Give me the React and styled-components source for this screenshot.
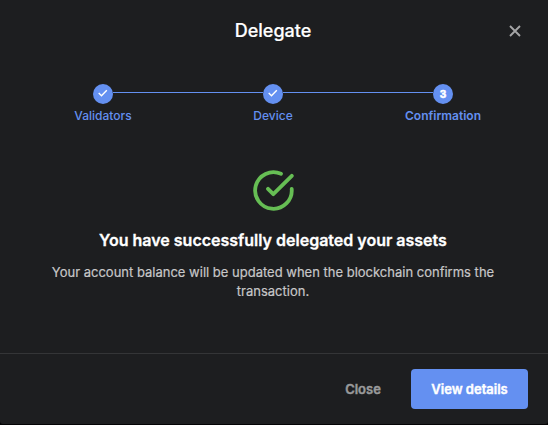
import React from 'react'
import styled, { createGlobalStyle } from 'styled-components'

const GlobalStyle = createGlobalStyle`
    * {
        box-sizing : border-box;
    }
    body {
        margin : 0;
        background-color : #040405;
        font-family : Inter, "Liberation Sans", sans-serif;
    }
`

const Modal = styled.div`
    display : flex;
    flex-direction : column;
    width : 548px;
    height : 424px;
    background-color : #1d1e20;
    border-radius : 0 0 3px 3px;
    color : #fff;
`

const Header = styled.header`
    display : grid;
    grid-template-columns : 1fr auto 1fr;
    align-items : center;
    height : 62px;
    padding : 0 26px 0 24px;
`

const Title = styled.h1`
    grid-column : 2;
    margin : 0;
    font-size : 18px;
    font-weight : 500;
    line-height : 22px;
    -webkit-text-stroke : 0.2px currentColor;
`

const CloseIcon = styled.button`
    display : flex;
    justify-self : end;
    padding : 0;
    border : 0;
    background : none;
    color : #a5a5a6;
    cursor : pointer;
`

const Stepper = styled.div`
    display : grid;
    grid-template-columns : repeat(3, 170px);
    justify-content : center;
    padding-top : 22px;
    padding-right : 2px;
`

const StepItem = styled.div`
    display : flex;
    flex-direction : column;
    align-items : center;
`

const Track = styled.div`
    display : flex;
    align-items : center;
    width : 100%;
`

const Line = styled.div`
    flex : 1;
    height : 1px;
    margin-bottom : 3px;
    background-color : ${({ $hidden }) => $hidden ? 'transparent' : '#6490f1'};
`

const Circle = styled.div`
    display : flex;
    align-items : center;
    justify-content : center;
    width : 20px;
    height : 20px;
    border-radius : 50%;
    background-color : #6490f1;
    font-size : 10px;
    font-weight : 800;
    line-height : 20px;
    -webkit-text-stroke : 0.4px currentColor;
`

const StepLabel = styled.span`
    margin-top : 4px;
    color : #6490f1;
    font-size : 12px;
    font-weight : ${({ $active }) => $active ? 600 : 500};
    line-height : 16px;
`

const Body = styled.div`
    display : flex;
    flex : 1;
    flex-direction : column;
    align-items : center;
    padding : 46px 42px 0 40px;
    text-align : center;
`

const Heading = styled.h2`
    margin : 19px 0 0;
    font-size : 16px;
    font-weight : 600;
    line-height : 20px;
    -webkit-text-stroke : 0.3px currentColor;
`

const Description = styled.p`
    margin : 13px 0 0;
    color : #c7c7c8;
    font-size : 13px;
    line-height : 19px;
    -webkit-text-stroke : 0.2px currentColor;
`

const Footer = styled.footer`
    display : flex;
    align-items : center;
    justify-content : flex-end;
    height : 71px;
    padding-right : 20px;
    border-top : 1px solid #343537;
`

const Button = styled.button`
    height : 40px;
    padding : 0;
    width : ${({ $primary }) => $primary ? '117px' : '96px'};
    border : 0;
    border-radius : 4px;
    background-color : ${({ $primary }) => $primary ? '#6490f1' : 'transparent'};
    color : ${({ $primary }) => $primary ? '#fff' : '#999a9b'};
    font-family : inherit;
    font-size : 13px;
    font-weight : 600;
    -webkit-text-stroke : 0.4px currentColor;
    cursor : pointer;
`

const steps = ['Validators', 'Device', 'Confirmation']

const Cross = () => (
    <svg width="14" height="14" viewBox="0 0 14 14" fill="none" stroke="currentColor" strokeWidth="1.9">
        <path d="M2 2l10 10M12 2L2 12" />
    </svg>
)

const StepCheck = () => (
    <svg width="20" height="20" viewBox="0 0 20 20" fill="none" stroke="#fff" strokeWidth="1.4">
        <path d="M5.7 9.1l2.8 2.6 5.3-5.5" />
    </svg>
)

const SuccessIcon = () => (
    <svg width="41" height="41" viewBox="0 0 41 41" fill="none" stroke="#66be54" strokeWidth="3.8" strokeLinecap="round" strokeLinejoin="round">
        <path d="M38.7 19A18.3 18.3 0 1 1 28 3.8" />
        <path d="M15 18.8l5.3 5.4L38.8 5.8" />
    </svg>
)

const Step = ({ label, index }) => {
    const last = index === steps.length - 1
    return (
        <StepItem>
            <Track>
                <Line $hidden={index === 0} />
                <Circle>{last ? index + 1 : <StepCheck />}</Circle>
                <Line $hidden={last} />
            </Track>
            <StepLabel $active={last}>{label}</StepLabel>
        </StepItem>
    )
}

const App = () => {
    return (
        <>
            <GlobalStyle />
            <Modal>
                <Header>
                    <Title>Delegate</Title>
                    <CloseIcon aria-label="Close"><Cross /></CloseIcon>
                </Header>
                <Stepper>
                    {steps.map((v, i) => <Step key={v} label={v} index={i} />)}
                </Stepper>
                <Body>
                    <SuccessIcon />
                    <Heading>You have successfully delegated your assets</Heading>
                    <Description>Your account balance will be updated when the blockchain confirms the transaction.</Description>
                </Body>
                <Footer>
                    <Button>Close</Button>
                    <Button $primary>View details</Button>
                </Footer>
            </Modal>
        </>
    )
}

export default App
